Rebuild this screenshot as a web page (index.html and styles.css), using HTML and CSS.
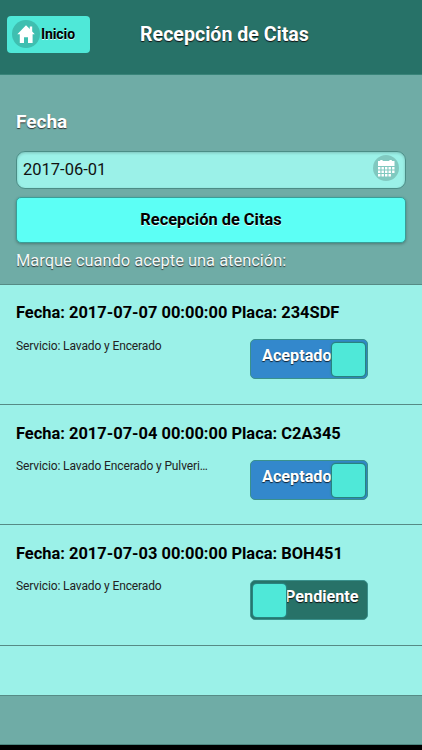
FILE: index.html
```
<!DOCTYPE html>
<html lang="es">
    <head>
        <meta charset="utf-8" />
        <meta name="viewport" content="width=device-width, initial-scale=1">
        <title>Recepción de Citas</title>
        <link rel="stylesheet" href="styles.css">
    </head>
    <body>
        <div class="page">
            <header class="header">
                <a class="btn-home" href="#">
                    <svg class="icon-home" viewBox="0 0 28 28">
                        <circle cx="14" cy="14" r="14" fill="#3fbfb0"/>
                        <path fill="#fff" d="M14 5.2 L5.3 14.3 H7.8 V23 H12 V17.2 H16 V23 H20.6 V14.3 H22.8 L20.2 11.6 V6.6 H17.8 V9.1 Z"/>
                    </svg>
                    <span>Inicio</span>
                </a>
                <h1 class="title">Recepción de Citas</h1>
            </header>
            <main class="content">
                <h2 class="label">Fecha</h2>
                <div class="date-box">
                    <span>2017-06-01</span>
                    <svg class="icon-calendar" viewBox="0 0 26 26">
                        <circle cx="13" cy="13" r="13" fill="#80c9c0"/>
                        <path fill="#fff" d="M5 6h2.2V5h2.4v1h6.8V5h2.4v1H21.5v5H5z"/>
                        <path fill="#fff" d="M5 12h2.4v2.4H5zM8.5 12h2.4v2.4H8.5zM12 12h2.4v2.4H12zM15.5 12h2.4v2.4h-2.4zM19.1 12h2.4v2.4h-2.4zM5 15.5h2.4v2.4H5zM8.5 15.5h2.4v2.4H8.5zM12 15.5h2.4v2.4H12zM15.5 15.5h2.4v2.4h-2.4zM19.1 15.5h2.4v2.4h-2.4zM5 19h2.4v2.4H5zM8.5 19h2.4v2.4H8.5zM12 19h2.4v2.4H12zM15.5 19h2.4v2.4h-2.4z"/>
                    </svg>
                </div>
                <button type="button" class="btn-main">Recepción de Citas</button>
                <p class="hint">Marque cuando acepte una atención:</p>
            </main>
            <ul class="list">
                <li class="item">
                    <h3 class="item-title">Fecha: 2017-07-07 00:00:00 Placa: 234SDF</h3>
                    <div class="item-row">
                        <p class="service">Servicio: Lavado y Encerado</p>
                        <div class="switch on">
                            <span class="switch-text">Aceptado</span>
                            <span class="handle"></span>
                        </div>
                    </div>
                </li>
                <li class="item">
                    <h3 class="item-title">Fecha: 2017-07-04 00:00:00 Placa: C2A345</h3>
                    <div class="item-row">
                        <p class="service">Servicio: Lavado Encerado y Pulveri…</p>
                        <div class="switch on">
                            <span class="switch-text">Aceptado</span>
                            <span class="handle"></span>
                        </div>
                    </div>
                </li>
                <li class="item">
                    <h3 class="item-title">Fecha: 2017-07-03 00:00:00 Placa: BOH451</h3>
                    <div class="item-row">
                        <p class="service">Servicio: Lavado y Encerado</p>
                        <div class="switch off">
                            <span class="switch-text">Pendiente</span>
                            <span class="handle"></span>
                        </div>
                    </div>
                </li>
                <li class="item empty"></li>
            </ul>
        </div>
    </body>
</html>
```
FILE: styles.css
```
* {
	box-sizing: border-box;
	padding: 0;
	margin: 0;
}
body {
	background-color: #000;
	font-family: Roboto, sans-serif;
}
.page {
	height: 745px;
	background-color: #6faca6;
	border-bottom: 1px solid #4d8780;
}
.header {
	display: flex;
	align-items: flex-start;
	height: 75px;
	padding: 16px 7px 0;
	background-color: #277268;
	border-bottom: 1px solid #388479;
}
.btn-home {
	display: flex;
	align-items: center;
	width: 83px;
	height: 37px;
	padding-left: 5px;
	padding-bottom: 1px;
	border-radius: 4px;
	background-color: #4fe8d8;
	color: #000;
	font-size: 14px;
	letter-spacing: -0.1px;
	font-weight: bold;
	text-decoration: none;
	text-shadow: 0 1px 0 #d8fff9;
}
.icon-home {
	width: 28px;
	height: 28px;
	margin-right: 1px;
}
.title {
	margin-left: 50px;
	color: #fff;
	font-size: 19.6px;
	line-height: 37px;
	white-space: nowrap;
	text-shadow: 0 1px 1px #111;
}
.content {
	padding: 34px 16px 0;
	height: 209px;
}
.label {
	color: #fff;
	font-size: 19px;
	line-height: 26px;
	text-shadow: 0 1px 1px #333;
}
.date-box {
	display: flex;
	justify-content: space-between;
	height: 38px;
	margin-top: 16px;
	padding: 3px 6px 0 6px;
	border: 1px solid #4b8d86;
	border-radius: 9px;
	background-color: #9bf1e8;
	box-shadow: inset 0 1px 3px rgba(0,0,0,0.2);
	color: #111;
	font-size: 16.5px;
	line-height: 29px;
}
.icon-calendar {
	width: 26px;
	height: 26px;
}
.btn-main {
	display: block;
	width: 100%;
	height: 46px;
	margin-top: 8px;
	border: 1px solid #389e98;
	border-radius: 5px;
	background-color: #5cfff5;
	box-shadow: 0 1px 3px rgba(0,0,0,0.3);
	color: #000;
	font: bold 16.4px/44px Roboto, sans-serif;
	text-shadow: 0 1px 0 #d8fff9;
}
.hint {
	margin-top: 6px;
	color: #f2f9f8;
	font-size: 16.45px;
	line-height: 24px;
	text-shadow: 0 1px 1px #333;
}
.list {
	list-style: none;
	border-top: 1px solid #568b85;
	background-color: #9bf1e8;
}
.item {
	height: 120px;
	padding: 17px 16px 0;
	border-bottom: 1px solid #568b85;
}
.item:nth-child(2) {
	padding-top: 18px;
}
.item:nth-child(3) {
	height: 121px;
	padding-top: 18px;
}
.empty {
	height: 50px;
}
.item-title {
	color: #000;
	font-size: 16.45px;
	line-height: 22px;
	white-space: nowrap;
}
.item-row {
	display: flex;
	padding-top: 15px;
}
.service {
	width: 234px;
	color: #222;
	font-size: 12px;
	letter-spacing: -0.12px;
	line-height: 14px;
}
.item + .item .service {
	line-height: 12px;
}
.switch {
	position: relative;
	width: 118px;
	height: 40px;
	border: 1px solid #39918c;
	border-radius: 5px;
	overflow: hidden;
	color: #fff;
	font-size: 16.2px;
	font-weight: bold;
	line-height: 32px;
}
.on {
	padding-left: 11px;
	background-color: #3388cc;
	text-shadow: 0 1px 1px #123;
}
.off {
	padding-left: 34px;
	background-color: #277268;
	text-shadow: 0 1px 1px #111;
}
/* the handle covers the end of the text */
.handle {
	position: absolute;
	top: 3px;
	width: 33px;
	height: 33px;
	border-radius: 4px;
	background-color: #4fe8d8;
	box-shadow: 0 0 0 1px #28837f, 0 0 2px 1px #28837f;
}
.on .handle {
	right: 2px;
}
.off .handle {
	left: 2px;
}
```
